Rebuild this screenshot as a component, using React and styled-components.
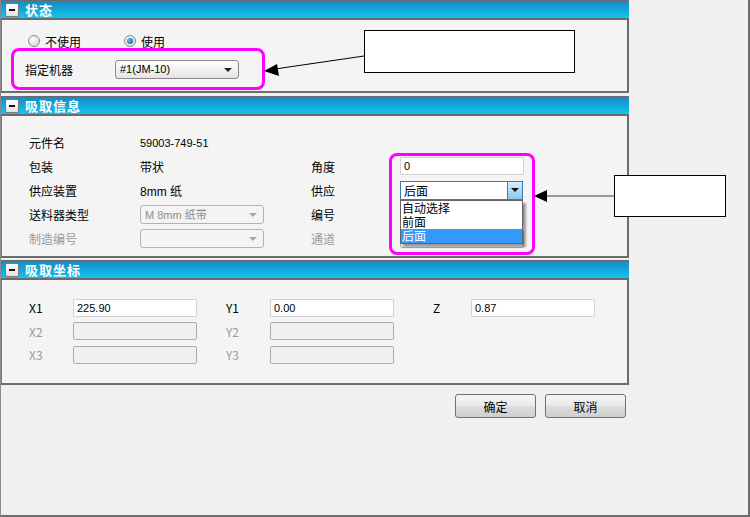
import React from "react";
import styled, { createGlobalStyle } from "styled-components";

const GlobalStyle = createGlobalStyle`
  html, body {
    margin: 0;
    padding: 0;
    background: #f0f0f0;
  }
  body {
    font-family: "Liberation Sans", "Noto Sans CJK SC", sans-serif;
    font-size: 12px;
    color: #000;
  }
`;

const Frame = styled.div`
  position: relative;
  width: 747px;
  height: 515px;
  border-left: 1px solid #8a8a8a;
  border-right: 2px solid #6d6d6d;
  border-bottom: 2px solid #6d6d6d;
  background: #f0f0f0;
  overflow: hidden;
`;

const Column = styled.div`
  width: 628px;
  display: flex;
  flex-direction: column;
`;

const Section = styled.section`
  display: flex;
  flex-direction: column;
  margin-top: ${(p) => p.$gap || 0}px;
`;

const Header = styled.div`
  height: 17px;
  border-top: 1px solid #6a6a6a;
  border-bottom: 2px solid #6a6a6a;
  background: linear-gradient(#1889c2, #12c4f1);
  display: flex;
  align-items: center;
  gap: 6px;
  padding-left: 4px;
`;

const Toggle = styled.span`
  width: 12px;
  height: 12px;
  border: 1px solid #7a7a7a;
  border-radius: 2px;
  background: linear-gradient(#ffffff, #e2e2e2);
  display: flex;
  align-items: center;
  justify-content: center;
  &::after {
    content: "";
    width: 6px;
    height: 2px;
    background: #111;
  }
`;

const Title = styled.span`
  color: #fff;
  font-weight: bold;
  font-size: 13px;
  font-family: "Noto Sans CJK SC", sans-serif;
  letter-spacing: 1px;
`;

const Body = styled.div`
  height: ${(p) => p.$h}px;
  box-sizing: border-box;
  background: #f4f4f4;
  border-left: 1px solid #7a7a7a;
  border-right: 2px solid #6d6d6d;
  border-bottom: 2px solid #6d6d6d;
  padding: ${(p) => p.$pad};
  display: flex;
  flex-direction: column;
`;

const Row = styled.div`
  display: flex;
  align-items: center;
  flex-shrink: 0;
  height: ${(p) => p.$h || 24}px;
`;

const Label = styled.span`
  width: ${(p) => p.$w}px;
  flex-shrink: 0;
  color: ${(p) => (p.$disabled ? "#9a9a9a" : "#000")};
  font-family: "Noto Sans CJK SC", sans-serif;
  white-space: nowrap;
`;

const Value = styled.span`
  width: ${(p) => p.$w}px;
  flex-shrink: 0;
  font-size: ${(p) => p.$size || 11}px;
  font-family: "Liberation Sans", "Noto Sans CJK SC", sans-serif;
  white-space: nowrap;
`;

const Cell = styled.div`
  width: ${(p) => p.$w}px;
  flex-shrink: 0;
`;

const RadioItem = styled.label`
  display: flex;
  align-items: center;
  gap: 5px;
  width: ${(p) => p.$w}px;
  font-family: "Noto Sans CJK SC", sans-serif;
`;

const RadioDot = styled.span`
  width: 10px;
  height: 10px;
  border-radius: 50%;
  border: 1px solid #8a8a8a;
  background: radial-gradient(circle at 40% 35%, #ffffff, #cfcfcf);
  display: flex;
  align-items: center;
  justify-content: center;
  &::after {
    content: "";
    display: ${(p) => (p.$on ? "block" : "none")};
    width: 6px;
    height: 6px;
    border-radius: 50%;
    background: radial-gradient(circle at 35% 35%, #5fc0f4, #0a4f8c);
  }
`;

const SelectBox = styled.div`
  position: relative;
  box-sizing: border-box;
  width: 124px;
  height: 19px;
  border: 1px solid ${(p) => (p.$disabled ? "#b3b3b3" : "#8a8a8a")};
  border-radius: 3px;
  background: ${(p) =>
    p.$disabled ? "#f4f4f4" : "linear-gradient(#ffffff, #e4e4e4)"};
  color: ${(p) => (p.$disabled ? "#8d8d8d" : "#000")};
  display: flex;
  align-items: center;
  padding-left: 4px;
  font-size: 11px;
  font-family: "Liberation Sans", "Noto Sans CJK SC", sans-serif;
  &::after {
    content: "";
    position: absolute;
    right: 6px;
    top: 7px;
    border-left: 4px solid transparent;
    border-right: 4px solid transparent;
    border-top: 4px solid ${(p) => (p.$disabled ? "#a8a8a8" : "#222")};
  }
`;

const ComboWrap = styled.div`
  position: relative;
  width: 123px;
`;

const Combo = styled.div`
  box-sizing: border-box;
  width: 123px;
  height: 19px;
  border: 1px solid #3d7bad;
  background: #fff;
  display: flex;
  align-items: center;
  padding-left: 3px;
  font-family: "Noto Sans CJK SC", sans-serif;
`;

const ComboButton = styled.span`
  position: absolute;
  right: 0;
  top: 0;
  box-sizing: border-box;
  width: 16px;
  height: 19px;
  border: 1px solid #3d7bad;
  background: linear-gradient(#d6eefb, #8cc8ea);
  display: flex;
  align-items: center;
  justify-content: center;
  &::after {
    content: "";
    border-left: 4px solid transparent;
    border-right: 4px solid transparent;
    border-top: 4px solid #111;
  }
`;

const DropList = styled.ul`
  position: absolute;
  left: 0;
  top: 19px;
  z-index: 2;
  box-sizing: border-box;
  width: 123px;
  margin: 0;
  padding: 0;
  list-style: none;
  background: #fff;
  border: 1px solid #646464;
  box-shadow: 3px 3px 2px rgba(0, 0, 0, 0.35);
`;

const DropItem = styled.li`
  height: 14px;
  line-height: 14px;
  padding-left: 1px;
  font-family: "Noto Sans CJK SC", sans-serif;
  font-size: 12px;
  background: ${(p) => (p.$active ? "#3399ff" : "transparent")};
  color: ${(p) => (p.$active ? "#fff" : "#000")};
`;

const TextInput = styled.div`
  box-sizing: border-box;
  width: 124px;
  height: 18px;
  border: 1px solid ${(p) => (p.$disabled ? "#adadad" : "#d2d2d2")};
  border-radius: ${(p) => (p.$disabled ? 2 : 1)}px;
  background: ${(p) => (p.$disabled ? "#f0f0f0" : "#fff")};
  display: flex;
  align-items: center;
  padding-left: 3px;
  font-size: 11px;
  font-family: "Liberation Sans", sans-serif;
`;

const ButtonRow = styled.div`
  display: flex;
  justify-content: flex-end;
  gap: 9px;
  margin-top: 9px;
  padding-right: 3px;
`;

const Button = styled.button`
  width: 81px;
  height: 24px;
  border: 1px solid #707070;
  border-radius: 3px;
  background: linear-gradient(#f4f4f4 0%, #ececec 45%, #dcdcdc 55%, #cfcfcf 100%);
  font-family: "Noto Sans CJK SC", sans-serif;
  font-size: 12px;
  color: #000;
  padding: 0;
`;

const Highlight = styled.div`
  position: absolute;
  left: ${(p) => p.$x}px;
  top: ${(p) => p.$y}px;
  width: ${(p) => p.$w}px;
  height: ${(p) => p.$h}px;
  box-sizing: border-box;
  border: 3px solid #ff00ff;
  border-radius: 8px;
  pointer-events: none;
`;

const Callout = styled.div`
  position: absolute;
  left: ${(p) => p.$x}px;
  top: ${(p) => p.$y}px;
  width: ${(p) => p.$w}px;
  height: ${(p) => p.$h}px;
  box-sizing: border-box;
  border: 1px solid #000;
  background: #fff;
  z-index: 3;
`;

const ArrowLayer = styled.svg`
  position: absolute;
  left: 0;
  top: 0;
  z-index: 3;
  pointer-events: none;
`;

const Annotations = () => (
  <>
    <Highlight $x={10} $y={48} $w={254} $h={42} />
    <Highlight $x={388} $y={153} $w={146} $h={102} />
    <Callout $x={363} $y={30} $w={211} $h={43} />
    <Callout $x={613} $y={175} $w={112} $h={42} />
    <ArrowLayer width="750" height="517">
      <line x1="363" y1="56" x2="274" y2="69" stroke="#000" strokeWidth="1" />
      <polygon points="263,71 276,64 278,76" fill="#000" />
      <line x1="613" y1="196" x2="544" y2="196" stroke="#999" strokeWidth="2" />
      <polygon points="533,196 546,190 546,202" fill="#000" />
    </ArrowLayer>
  </>
);

export default function App() {
  return (
    <>
      <GlobalStyle />
      <Frame>
        <Column>
          <Section>
            <Header>
              <Toggle />
              <Title>状态</Title>
            </Header>
            <Body $h={73} $pad="9px 0 0 26px">
              <Row>
                <RadioItem $w={96}>
                  <RadioDot />
                  不使用
                </RadioItem>
                <RadioItem $w={60}>
                  <RadioDot $on />
                  使用
                </RadioItem>
              </Row>
              <Row $h={32}>
                <Label $w={90} style={{ marginLeft: -3 }}>指定机器</Label>
                <SelectBox>#1(JM-10)</SelectBox>
              </Row>
            </Body>
          </Section>

          <Section $gap={3}>
            <Header>
              <Toggle />
              <Title>吸取信息</Title>
            </Header>
            <Body $h={142} $pad="15px 0 0 27px">
              <Row $h={23.5}>
                <Label $w={111}>元件名</Label>
                <Value $w={171}>59003-749-51</Value>
              </Row>
              <Row $h={23.5}>
                <Label $w={111}>包装</Label>
                <Label $w={171}>带状</Label>
                <Label $w={89}>角度</Label>
                <TextInput>0</TextInput>
              </Row>
              <Row $h={24}>
                <Label $w={111}>供应装置</Label>
                <Value $w={171} $size={12}>8mm 纸</Value>
                <Label $w={89}>供应</Label>
                <ComboWrap>
                  <Combo>后面</Combo>
                  <ComboButton />
                  <DropList>
                    <DropItem>自动选择</DropItem>
                    <DropItem>前面</DropItem>
                    <DropItem $active>后面</DropItem>
                  </DropList>
                </ComboWrap>
              </Row>
              <Row $h={24.5}>
                <Label $w={111}>送料器类型</Label>
                <Cell $w={171}>
                  <SelectBox $disabled>M 8mm 纸带</SelectBox>
                </Cell>
                <Label $w={89}>编号</Label>
                <TextInput />
              </Row>
              <Row $h={24}>
                <Label $w={111} $disabled>制造编号</Label>
                <Cell $w={171}>
                  <SelectBox $disabled />
                </Cell>
                <Label $w={89} $disabled>通道</Label>
                <TextInput $disabled />
              </Row>
            </Body>
          </Section>

          <Section $gap={2}>
            <Header>
              <Toggle />
              <Title>吸取坐标</Title>
            </Header>
            <Body $h={105} $pad="16px 0 0 27px">
              <Row $h={23.5}>
                <Label $w={44}>X1</Label>
                <Cell $w={153}>
                  <TextInput>225.90</TextInput>
                </Cell>
                <Label $w={44}>Y1</Label>
                <Cell $w={163}>
                  <TextInput>0.00</TextInput>
                </Cell>
                <Label $w={38}>Z</Label>
                <TextInput>0.87</TextInput>
              </Row>
              <Row $h={23.5}>
                <Label $w={44} $disabled>X2</Label>
                <Cell $w={153}>
                  <TextInput $disabled />
                </Cell>
                <Label $w={44} $disabled>Y2</Label>
                <TextInput $disabled />
              </Row>
              <Row $h={23.5}>
                <Label $w={44} $disabled>X3</Label>
                <Cell $w={153}>
                  <TextInput $disabled />
                </Cell>
                <Label $w={44} $disabled>Y3</Label>
                <TextInput $disabled />
              </Row>
            </Body>
          </Section>

          <ButtonRow>
            <Button>确定</Button>
            <Button>取消</Button>
          </ButtonRow>
        </Column>
        <Annotations />
      </Frame>
    </>
  );
}
